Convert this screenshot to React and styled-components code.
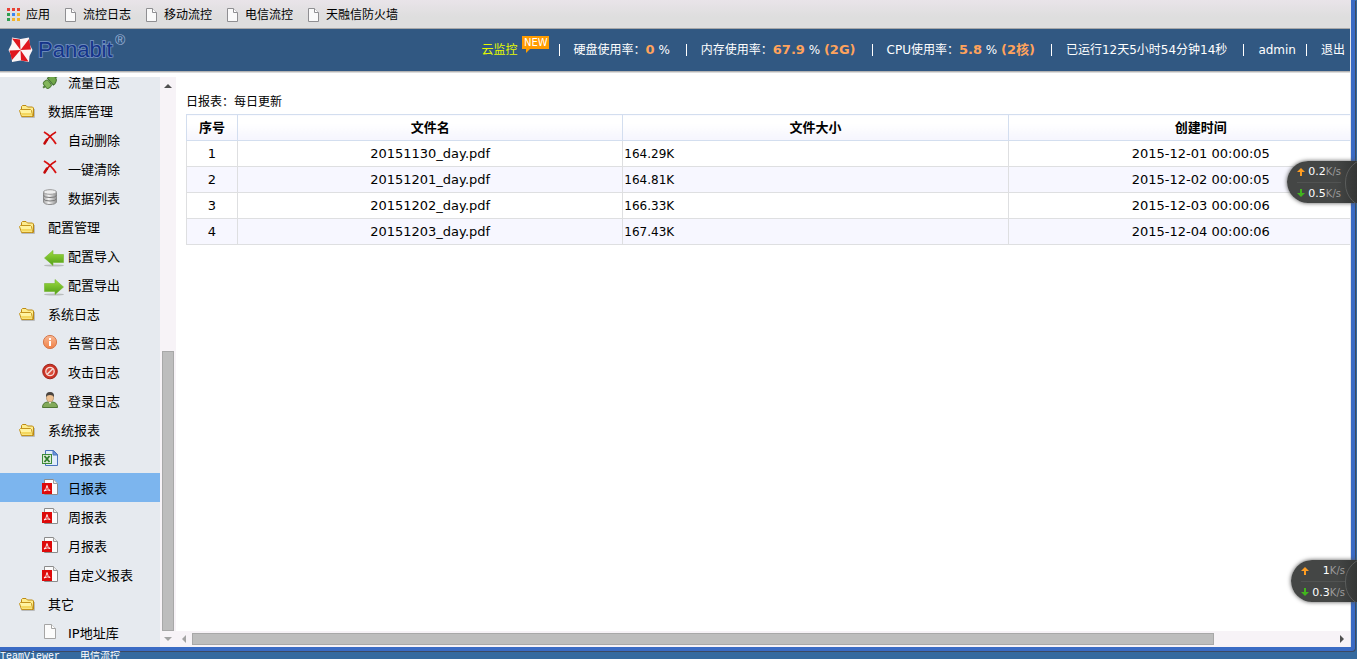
import React from "react";
import styled, { createGlobalStyle, css } from "styled-components";

const GlobalStyle = createGlobalStyle`
  * {
    box-sizing: border-box;
  }
  body {
    margin: 0;
    font-family: "DejaVu Sans", "Noto Sans CJK SC", sans-serif;
    font-size: 12px;
    color: #000;
  }
  a {
    color: inherit;
    text-decoration: none;
  }
`;

const Desktop = styled.div`
  position: relative;
  display: flex;
  flex-direction: column;
  height: 100vh;
  overflow: hidden;
  background: #356a9f;
`;

const BrowserWindow = styled.div`
  display: flex;
  flex-direction: column;
  flex: 1;
  min-height: 0;
  margin-right: 2px;
  padding-right: 1px;
  border: 0 solid #3a6bc4;
  border-width: 0 4px 4px 0;
  border-bottom-right-radius: 4px;
  box-shadow: 1px 1px 0 #3b4a63;
  background: #e2e4e8;
`;

const BookmarkBar = styled.nav`
  display: flex;
  align-items: center;
  gap: 14px;
  height: 29px;
  padding: 1px 0 0 6px;
  border-bottom: 1px solid #a8a8a8;
  background: linear-gradient(#e9e4e9, #dedede 60%);
`;

const Bookmark = styled.a`
  display: flex;
  align-items: center;
  gap: 6px;
  line-height: 16px;
`;

const Header = styled.header`
  display: flex;
  align-items: center;
  justify-content: space-between;
  height: 43px;
  padding: 0 5px 0 7px;
  border-bottom: 1px solid #b4b4b4;
  background: #315882;
  color: #fff;
`;

const Logo = styled.a`
  display: flex;
  height: 38px;
`;

const StatusList = styled.div`
  display: flex;
  align-items: center;
  line-height: 16px;
  white-space: pre;
`;

const Divider = styled.span`
  width: 1px;
  height: 12px;
  margin: 0 14px 0 ${(props) => (props.$tight ? "10px" : "16px")};
  background: #fff;
`;

const CloudLink = styled.a`
  display: flex;
  color: #e4f800;
`;

const NewBadge = styled.svg`
  margin: -6px -6px 0 4px;
`;

const Usage = styled.b`
  color: #ffa35c;
  font-size: 13px;
`;

const Body = styled.div`
  display: flex;
  flex: 1;
  min-height: 0;
  padding-top: 4px;
  border-top: 1px solid #dcdcdc;
  background: #fff;
`;

const Sidebar = styled.nav`
  display: flex;
  flex-direction: column;
  justify-content: flex-end;
  width: 160px;
  overflow: hidden;
  background: #e6eaef;
`;

const MenuRow = styled.a`
  display: flex;
  align-items: center;
  flex-shrink: 0;
  gap: ${(props) => (props.$group ? "13px" : "8px")};
  height: 29px;
  padding-left: ${(props) => (props.$group ? "19px" : "40px")};
  font-size: 13px;
  ${(props) =>
    props.$active &&
    css`
      background: #7cb5ee;
    `}
`;

const MenuIcon = styled.svg`
  flex-shrink: 0;
  overflow: visible;
`;

const ScrollColumn = styled.div`
  display: flex;
  flex-direction: column;
  align-items: center;
  width: 16px;
  background: #f7f3f7;
`;

const ScrollRow = styled.div`
  display: flex;
  align-items: center;
  height: 16px;
  background: #f7f3f7;
`;

const ScrollTrack = styled.div`
  display: flex;
  flex: 1;
  flex-direction: ${(props) => (props.$vertical ? "column" : "row")};
  justify-content: ${(props) => (props.$vertical ? "flex-end" : "flex-start")};
`;

const ScrollThumb = styled.div`
  width: ${(props) => (props.$vertical ? "12px" : "89.5%")};
  height: ${(props) => (props.$vertical ? "52%" : "12px")};
  border: 1px solid #a8a8a8;
  background: #bdbdbd;
`;

const Main = styled.main`
  display: flex;
  flex: 1;
  flex-direction: column;
  min-width: 0;
`;

const Report = styled.section`
  flex: 1;
  padding: 17px 0 0 10px;
  overflow: hidden;
`;

const ReportTitle = styled.h1`
  margin: 0 0 4px;
  font-size: 12px;
  font-weight: normal;
  line-height: 16px;
`;

const ReportTable = styled.table`
  width: calc(100% + 44px);
  border-collapse: collapse;
  table-layout: fixed;
`;

const HeadCell = styled.th`
  width: ${(props) => props.$width || "auto"};
  height: 26px;
  padding: 0;
  border: 1px solid #d3deef;
  background: linear-gradient(#fff 30%, #f5f5fe);
  font-size: 13px;
  line-height: 16px;
`;

const Row = styled.tr`
  background: #fff;
  &:nth-child(even) {
    background: #f7f7ff;
  }
`;

const Cell = styled.td`
  height: 26px;
  padding: 0 1px;
  border: 1px solid #dedfe1;
  font-size: 13px;
  line-height: 16px;
  text-align: center;
`;

const SizeCell = styled(Cell)`
  font-size: 12px;
  text-align: left;
`;

const DesktopLabels = styled.div`
  display: flex;
  gap: 20px;
  height: 8px;
  overflow: hidden;
  color: #fff;
  font-family: "Liberation Mono", "Noto Sans CJK SC", monospace;
  font-size: 10px;
  line-height: 12px;
`;

const SpeedMeter = styled.aside`
  position: absolute;
  right: 0;
  top: ${(props) => props.$top};
  width: ${(props) => props.$width};
  height: 42px;
  padding: 0 ${(props) => props.$inset} 0 10px;
  border-radius: 21px 0 0 21px;
  background: linear-gradient(90deg, #444645 70%, #343635);
  box-shadow: 0 0 4px #555;
  color: #fff;
  font-size: 11px;
  overflow: hidden;
  &::after {
    content: "";
    position: absolute;
    top: -3px;
    right: -38px;
    width: 48px;
    height: 48px;
    border: 1px solid #5a5c5b;
    border-radius: 24px;
  }
`;

const SpeedLine = styled.div`
  display: flex;
  align-items: center;
  justify-content: space-between;
  height: 21px;
  & + & {
    border-top: 1px solid #515352;
  }
`;

const Unit = styled.span`
  color: #9b9b9b;
  font-size: 10px;
`;

const PageIcon = () => (
  <svg width="13" height="14" viewBox="0 0 13 14" aria-hidden="true">
    <path d="M1.5.5h6l4 4v9h-10z" fill="#fafafa" stroke="#8f8f92" />
    <path d="M7.5.5v4h4" fill="#fff" stroke="#8f8f92" />
  </svg>
);

const appColors = [
  "#e84135", "#e84135", "#e84135",
  "#2f9e50", "#3b86ef", "#f3b429",
  "#2f9e50", "#f3b429", "#f3b429",
];

const AppsIcon = () => (
  <svg width="14" height="14" viewBox="0 0 14 14" aria-hidden="true">
    {appColors.map((color, i) => (
      <rect
        key={i}
        x={1 + (i % 3) * 5}
        y={Math.floor(i / 3) * 5}
        width="3"
        height="3"
        fill={color}
      />
    ))}
  </svg>
);

const PanabitLogo = () => (
  <svg width="122" height="38" viewBox="0 0 122 38" role="img" aria-label="Panabit">
    <path
      d="M13.500 8L22 6.500l.5 6.500 3 6-3 6-.5 6-8.500-1.500L5 31l-.5-6-3-6 3-6L5 6.500z"
      fill="#fbf4f5"
    />
    <path
      d="M13.500 19L13 8.500 5 7.500zM13.500 19L22 8l2 10.500zM13.500 19L14 29.500l7.500 1zM13.500 19L2.500 19.500 5 29z"
      fill="#e0161e"
    />
    <text
      x="31"
      y="26"
      fontFamily="Liberation Sans, sans-serif"
      fontSize="22"
      fill="#143489"
      stroke="#6d8bbd"
      strokeWidth="1.800"
      paintOrder="stroke"
    >
      Panabit
    </text>
    <text
      x="108"
      y="14"
      fontFamily="Liberation Sans, sans-serif"
      fontSize="14"
      fill="#9db2d6"
    >
      ®
    </text>
  </svg>
);

const icons = {
  folder: (
    <>
      <path d="M2.500 14.500h13V6" fill="none" stroke="#b9bbbd" />
      <path d="M2.500 13V3.500l1-1h3.500l1.500 1.500h5l1 1v8.500h-11z" fill="#fdec8e" stroke="#bd8a12" />
      <path d="M.5 7.500l1-1h10l1 1 1 5-1 1h-10z" fill="#fff3a0" stroke="#c4941d" />
      <path d="M2 10h10.500l.5 2.500H3z" fill="#f4d75e" />
    </>
  ),
  plug: (
    <g transform="rotate(-40 8 8)">
      <path d="M-1 8h4M13 8h4" stroke="#54813a" strokeWidth="2" />
      <rect x="1.500" y="4" width="6" height="8" rx="2" fill="#83b65c" stroke="#4d7d35" />
      <path d="M8.500 3.500h2q4.500 1 4.500 4.500t-4.500 4.500h-2z" fill="#72a84b" stroke="#416e2c" />
    </g>
  ),
  remove: (
    <>
      <path d="M2 0q7 4 12 12" fill="none" stroke="#d91414" strokeWidth="1.800" />
      <path d="M14 0Q7 4 2.500 11.500" fill="none" stroke="#d20c0c" strokeWidth="1.500" />
      <path d="M5 7.500L2.500 11.500" fill="none" stroke="#c40a0a" strokeWidth="2.500" strokeLinecap="round" />
    </>
  ),
  database: (
    <>
      <path d="M1.500 2v10q1 2.500 6.500 2.500t6.500-2.500V2z" fill="url(#metal)" stroke="#8d8d8d" />
      <ellipse cx="8" cy="2" rx="6.500" ry="2.300" fill="#eee" stroke="#999" />
      <path d="M1.500 5.500q1 2 6.500 2t6.500-2M1.500 9q1 2 6.500 2t6.500-2" fill="none" stroke="#777" />
    </>
  ),
  importArrow: (
    <>
      <ellipse cx="12" cy="17.500" rx="10" ry="1" fill="#b9bdbd" />
      <path d="M2.500 10L11 2.500V6.500h10.500v8H11v3z" fill="url(#green)" stroke="#74b62b" strokeWidth="0.600" />
    </>
  ),
  exportArrow: (
    <>
      <ellipse cx="12" cy="17.500" rx="10" ry="1" fill="#b9bdbd" />
      <path d="M21.500 10L13 2.500v4H2.500v8H13v3z" fill="url(#green)" stroke="#74b62b" strokeWidth="0.600" />
    </>
  ),
  info: (
    <>
      <circle cx="8" cy="7" r="6.600" fill="url(#orange)" stroke="#d5794e" />
      <path d="M8 3v2M8 6v5" stroke="#fff" strokeWidth="2" />
    </>
  ),
  forbid: (
    <>
      <circle cx="8" cy="7.500" r="7.300" fill="#cc3426" stroke="#9e2219" />
      <circle cx="8" cy="7.500" r="4.200" fill="#d94b38" stroke="#f6dcd8" strokeWidth="1.300" />
      <path d="M5 10.500l6-6" stroke="#f6dcd8" strokeWidth="1.600" />
    </>
  ),
  user: (
    <>
      <path d="M.5 14.500q0-5 5-5.500h5q5 .5 5 5.500z" fill="#82aa5a" stroke="#4f7733" />
      <path d="M6 8l2 3 2-3z" fill="#fff" />
      <ellipse cx="8" cy="4.500" rx="3.500" ry="4.300" fill="#efc293" stroke="#a37748" strokeWidth="0.600" />
      <path d="M4 4q-.5-5 4-5t4 5q-1-2-4-2T4 4z" fill="#4a4440" />
    </>
  ),
  excel: (
    <>
      <path d="M3.500-.5h8l4 4v11h-12z" fill="#e1edfb" stroke="#4a74bd" />
      <path d="M11-.5V4h4.500z" fill="#6d9be0" stroke="#4a74bd" />
      <rect x="0" y="3" width="10" height="10" fill="#3d8a38" />
      <rect x="1" y="4" width="8" height="8" fill="#dcebd5" />
      <path d="M2.500 5l5 6M7.500 5l-5 6" stroke="#2d7b2c" strokeWidth="1.800" />
    </>
  ),
  pdf: (
    <>
      <path d="M2.500-.5h9l4 4v11h-13z" fill="#fbfbfb" stroke="#8c8c8c" />
      <path d="M11.500-.5v4h4" fill="#eee" stroke="#9c9c9c" />
      <rect x="0" y="3" width="10" height="11" fill="#dd0a0a" />
      <path d="M2 11q2.500-2 3-5.500 .5 3.500 3 5-2.500-1.500-6 .5" fill="none" stroke="#fff" strokeWidth="0.900" />
    </>
  ),
  file: (
    <>
      <path d="M2.500-.5h7l4 4v10h-11z" fill="#fcfcfc" stroke="#a5a5a5" />
      <path d="M9.500-.5v4h4" fill="#fff" stroke="#a5a5a5" />
    </>
  ),
};

const GradientSvg = styled.svg`
  position: absolute;
`;

const IconColors = () => (
  <GradientSvg width="0" height="0" aria-hidden="true">
    <defs>
      <linearGradient id="green" x2="0" y2="1">
        <stop offset="0" stopColor="#9fdc3f" />
        <stop offset="1" stopColor="#4f9e17" />
      </linearGradient>
      <linearGradient id="metal">
        <stop offset="0" stopColor="#a5a5a5" />
        <stop offset="0.400" stopColor="#f6f6f6" />
        <stop offset="1" stopColor="#909090" />
      </linearGradient>
      <linearGradient id="orange" x2="0" y2="1">
        <stop offset="0" stopColor="#f8b995" />
        <stop offset="1" stopColor="#f08046" />
      </linearGradient>
    </defs>
  </GradientSvg>
);

const bookmarks = ["流控日志", "移动流控", "电信流控", "天融信防火墙"];

const menu = [
  { label: "流量日志", icon: "plug" },
  { label: "数据库管理", icon: "folder", group: true },
  { label: "自动删除", icon: "remove" },
  { label: "一键清除", icon: "remove" },
  { label: "数据列表", icon: "database" },
  { label: "配置管理", icon: "folder", group: true },
  { label: "配置导入", icon: "importArrow" },
  { label: "配置导出", icon: "exportArrow" },
  { label: "系统日志", icon: "folder", group: true },
  { label: "告警日志", icon: "info" },
  { label: "攻击日志", icon: "forbid" },
  { label: "登录日志", icon: "user" },
  { label: "系统报表", icon: "folder", group: true },
  { label: "IP报表", icon: "excel" },
  { label: "日报表", icon: "pdf", active: true },
  { label: "周报表", icon: "pdf" },
  { label: "月报表", icon: "pdf" },
  { label: "自定义报表", icon: "pdf" },
  { label: "其它", icon: "folder", group: true },
  { label: "IP地址库", icon: "file" },
];

const reports = [
  { name: "20151130_day.pdf", size: "164.29K", created: "2015-12-01 00:00:05" },
  { name: "20151201_day.pdf", size: "164.81K", created: "2015-12-02 00:00:05" },
  { name: "20151202_day.pdf", size: "166.33K", created: "2015-12-03 00:00:06" },
  { name: "20151203_day.pdf", size: "167.43K", created: "2015-12-04 00:00:06" },
];

const arrowPaths = {
  up: "M4 11l4-4 4 4z",
  down: "M4 6l4 4 4-4z",
  left: "M10 4L6 8l4 4z",
  right: "M6 4l4 4-4 4z",
};

function ScrollArrow({ direction, color = "#505050" }) {
  return (
    <svg width="16" height="16" viewBox="0 0 16 16" aria-hidden="true">
      <path d={arrowPaths[direction]} fill={color} />
    </svg>
  );
}

function MenuItem({ item }) {
  return (
    <MenuRow href="#" $group={item.group} $active={item.active}>
      <MenuIcon
        width={item.group ? 16 : 20}
        height="16"
        viewBox={item.group ? "0 0 16 16" : "-2 0 20 16"}
        aria-hidden="true"
      >
        {icons[item.icon]}
      </MenuIcon>
      {item.label}
    </MenuRow>
  );
}

function Speed({ top, width, inset, up, down }) {
  return (
    <SpeedMeter $top={top} $width={width} $inset={inset}>
      <SpeedLine>
        <svg width="8" height="8" viewBox="0 0 8 8" aria-hidden="true">
          <path d="M4 0l4 4H5v4H3V4H0z" fill="#ff9d22" />
        </svg>
        <span>
          {up}
          <Unit>K/s</Unit>
        </span>
      </SpeedLine>
      <SpeedLine>
        <svg width="8" height="8" viewBox="0 0 8 8" aria-hidden="true">
          <path d="M4 8l4-4H5V0H3v4H0z" fill="#41b51e" />
        </svg>
        <span>
          {down}
          <Unit>K/s</Unit>
        </span>
      </SpeedLine>
    </SpeedMeter>
  );
}

function App() {
  return (
    <Desktop>
      <GlobalStyle />
      <IconColors />
      <BrowserWindow>
        <BookmarkBar>
          <Bookmark href="#">
            <AppsIcon />
            应用
          </Bookmark>
          {bookmarks.map((name) => (
            <Bookmark href="#" key={name}>
              <PageIcon />
              {name}
            </Bookmark>
          ))}
        </BookmarkBar>
        <Header>
          <Logo href="#">
            <PanabitLogo />
          </Logo>
          <StatusList>
            <CloudLink href="#">
              云监控
              <NewBadge width="27" height="17" viewBox="0 0 27 17" role="img" aria-label="NEW">
                <path d="M0 0h27v13H8l-4 4v-4H0z" fill="#ff9c00" />
                <text x="2" y="10" fontSize="10" fill="#fff">
                  NEW
                </text>
              </NewBadge>
            </CloudLink>
            <Divider />
            <span>
              硬盘使用率：<Usage>0</Usage> %
            </span>
            <Divider />
            <span>
              内存使用率：<Usage>67.9</Usage> % <Usage>(2G)</Usage>
            </span>
            <Divider />
            <span>
              CPU使用率：<Usage>5.8</Usage> % <Usage>(2核)</Usage>
            </span>
            <Divider />
            <span>已运行12天5小时54分钟14秒</span>
            <Divider />
            <a href="#">admin</a>
            <Divider $tight />
            <a href="#">退出</a>
          </StatusList>
        </Header>
        <Body>
          <Sidebar>
            {menu.map((item) => (
              <MenuItem item={item} key={item.label} />
            ))}
          </Sidebar>
          <ScrollColumn>
            <ScrollArrow direction="up" />
            <ScrollTrack $vertical>
              <ScrollThumb $vertical />
            </ScrollTrack>
            <ScrollArrow direction="down" color="#a3a3a3" />
          </ScrollColumn>
          <Main>
            <Report>
              <ReportTitle>日报表：每日更新</ReportTitle>
              <ReportTable>
                <thead>
                  <tr>
                    <HeadCell $width="51px">序号</HeadCell>
                    <HeadCell>文件名</HeadCell>
                    <HeadCell>文件大小</HeadCell>
                    <HeadCell>创建时间</HeadCell>
                  </tr>
                </thead>
                <tbody>
                  {reports.map((report, i) => (
                    <Row key={report.name}>
                      <Cell>{i + 1}</Cell>
                      <Cell>{report.name}</Cell>
                      <SizeCell>{report.size}</SizeCell>
                      <Cell>{report.created}</Cell>
                    </Row>
                  ))}
                </tbody>
              </ReportTable>
            </Report>
            <ScrollRow>
              <ScrollArrow direction="left" color="#a3a3a3" />
              <ScrollTrack>
                <ScrollThumb />
              </ScrollTrack>
              <ScrollArrow direction="right" />
            </ScrollRow>
          </Main>
        </Body>
      </BrowserWindow>
      <DesktopLabels>
        <span>TeamViewer</span>
        <span>电信流控</span>
      </DesktopLabels>
      <Speed top="161px" width="70px" inset="16px" up="0.2" down="0.5" />
      <Speed top="560px" width="66px" inset="12px" up="1" down="0.3" />
    </Desktop>
  );
}

export default App;
